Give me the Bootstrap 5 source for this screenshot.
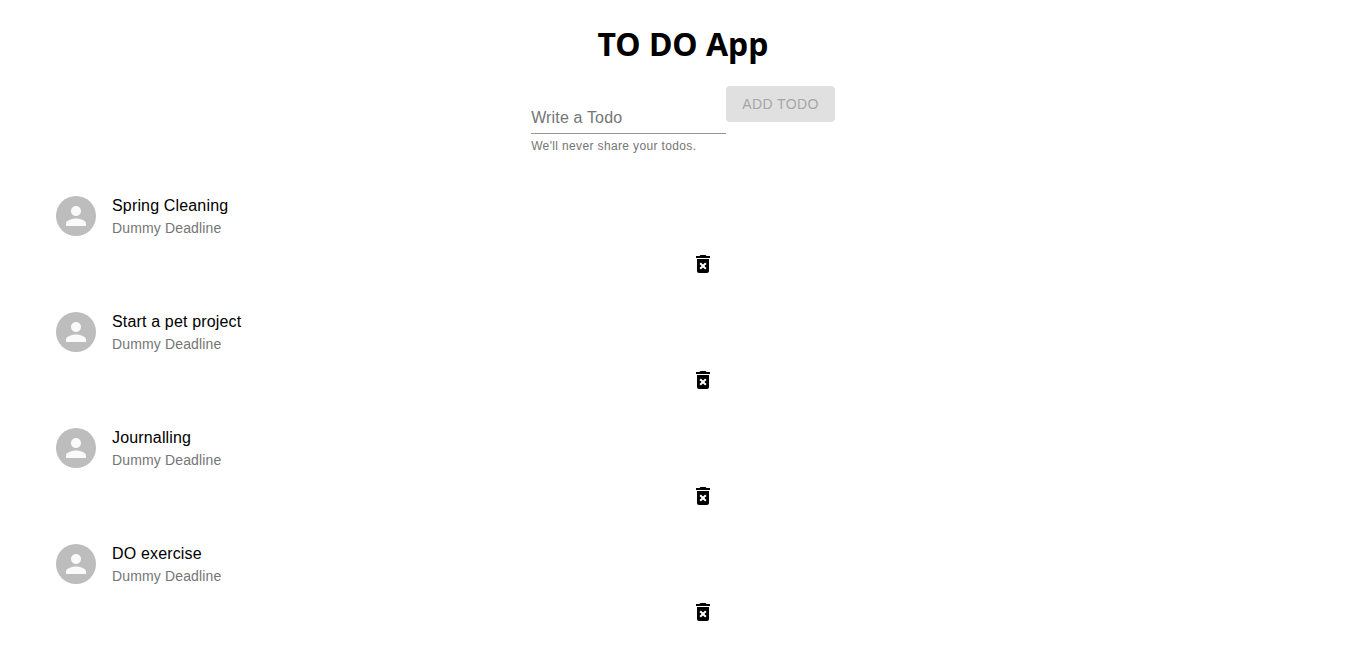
<!DOCTYPE html>
<html lang="en">
<head>
<meta charset="utf-8">
<meta name="viewport" content="width=device-width, initial-scale=1">
<title>TO DO App</title>
<link href="https://cdn.jsdelivr.net/npm/bootstrap@5.3.0/dist/css/bootstrap.min.css" rel="stylesheet">
<style>
body { font-family: "Liberation Sans", Arial, sans-serif; color: #000; line-height: 24px; }
.app-title { font: 700 32px/44px "Noto Sans", sans-serif; margin: 22px 0 20px; }
.todo-field { width: 195px; padding-top: 16px; }
.todo-input { height: 32px; border: 0; border-bottom: 1px solid #949494; border-radius: 0; padding: 3px 0 1px; font-size: 16px; }
.todo-input:focus { box-shadow: none; border-color: #1976d2; }
/* The label sits inside the empty box and gives way to typed text */
.todo-label { line-height: 32px; letter-spacing: .01em; color: #757575; pointer-events: none; }
.todo-input:focus + .todo-label, .todo-input:not(:placeholder-shown) + .todo-label { opacity: 0; }
.todo-help { font-size: 12px; line-height: 20px; letter-spacing: .03em; color: #757575; margin-top: 2px; }
.btn-add { height: 36px; padding: 0 16px; border: 0; font-size: 14px; letter-spacing: .03em; }
.btn-add:disabled { background: #e0e0e0; color: #a6a6a6; opacity: 1; }
.todo-list { padding: 0 40px; margin: 30px 0 0; }
.todo-item { padding: 8px 16px; }
.avatar { width: 40px; height: 40px; background: #bdbdbd; margin-top: 2px; }
.todo-name { font-size: 16px; letter-spacing: .01em; line-height: 24px; }
.todo-date { font-size: 14px; letter-spacing: .01em; line-height: 20px; color: #757575; }
.btn-trash { line-height: 0; color: #000; }
.trash-row { padding: 6px 0 26px 40px; }
</style>
</head>
<body>
<main>
<h1 class="app-title text-center">TO DO App</h1>
<form class="d-flex justify-content-center align-items-start">
<div class="todo-field">
<div class="position-relative">
<input id="todo" class="form-control todo-input" type="text" placeholder=" " aria-describedby="todo-help">
<label class="todo-label position-absolute top-0 start-0" for="todo">Write a Todo</label>
</div>
<div id="todo-help" class="todo-help">We'll never share your todos.</div>
</div>
<button class="btn btn-add rounded-1" type="submit" disabled>ADD TODO</button>
</form>
<ul class="todo-list list-unstyled" id="list"></ul>
</main>
<template id="row">
<li>
<div class="todo-item d-flex align-items-start gap-3">
<span class="avatar rounded-circle d-flex align-items-center justify-content-center flex-shrink-0"><svg width="30" height="30" viewBox="0 0 24 24" fill="#fafafa" aria-hidden="true"><path d="M12 12c2.210 0 4-1.790 4-4s-1.790-4-4-4-4 1.790-4 4 1.790 4 4 4zm0 2c-2.670 0-8 1.340-8 4v2h16v-2c0-2.660-5.330-4-8-4z"/></svg></span>
<div><div class="todo-name"></div><div class="todo-date">Dummy Deadline</div></div>
</div>
<div class="trash-row d-flex justify-content-center">
<button class="btn btn-trash border-0 p-0" type="button" aria-label="Delete todo"><svg width="24" height="24" viewBox="0 0 24 24" fill="currentColor" aria-hidden="true"><path d="M6 19c0 1.100.9 2 2 2h8c1.100 0 2-.9 2-2V7H6v12zm2.460-7.120 1.410-1.410L12 12.590l2.120-2.120 1.410 1.410L13.410 14l2.120 2.120-1.410 1.410L12 15.410l-2.120 2.120-1.410-1.410L10.590 14l-2.130-2.120zM15.500 4l-1-1h-5l-1 1H5v2h14V4z"/></svg></button>
</div>
</li>
</template>
<script>
const list = document.getElementById('list');
['Spring Cleaning', 'Start a pet project', 'Journalling', 'DO exercise'].forEach(name => {
  const item = document.getElementById('row').content.cloneNode(true);
  item.querySelector('.todo-name').textContent = name;
  list.append(item);
});
</script>
<script src="https://cdn.jsdelivr.net/npm/bootstrap@5.3.0/dist/js/bootstrap.bundle.min.js"></script>
</body>
</html>
